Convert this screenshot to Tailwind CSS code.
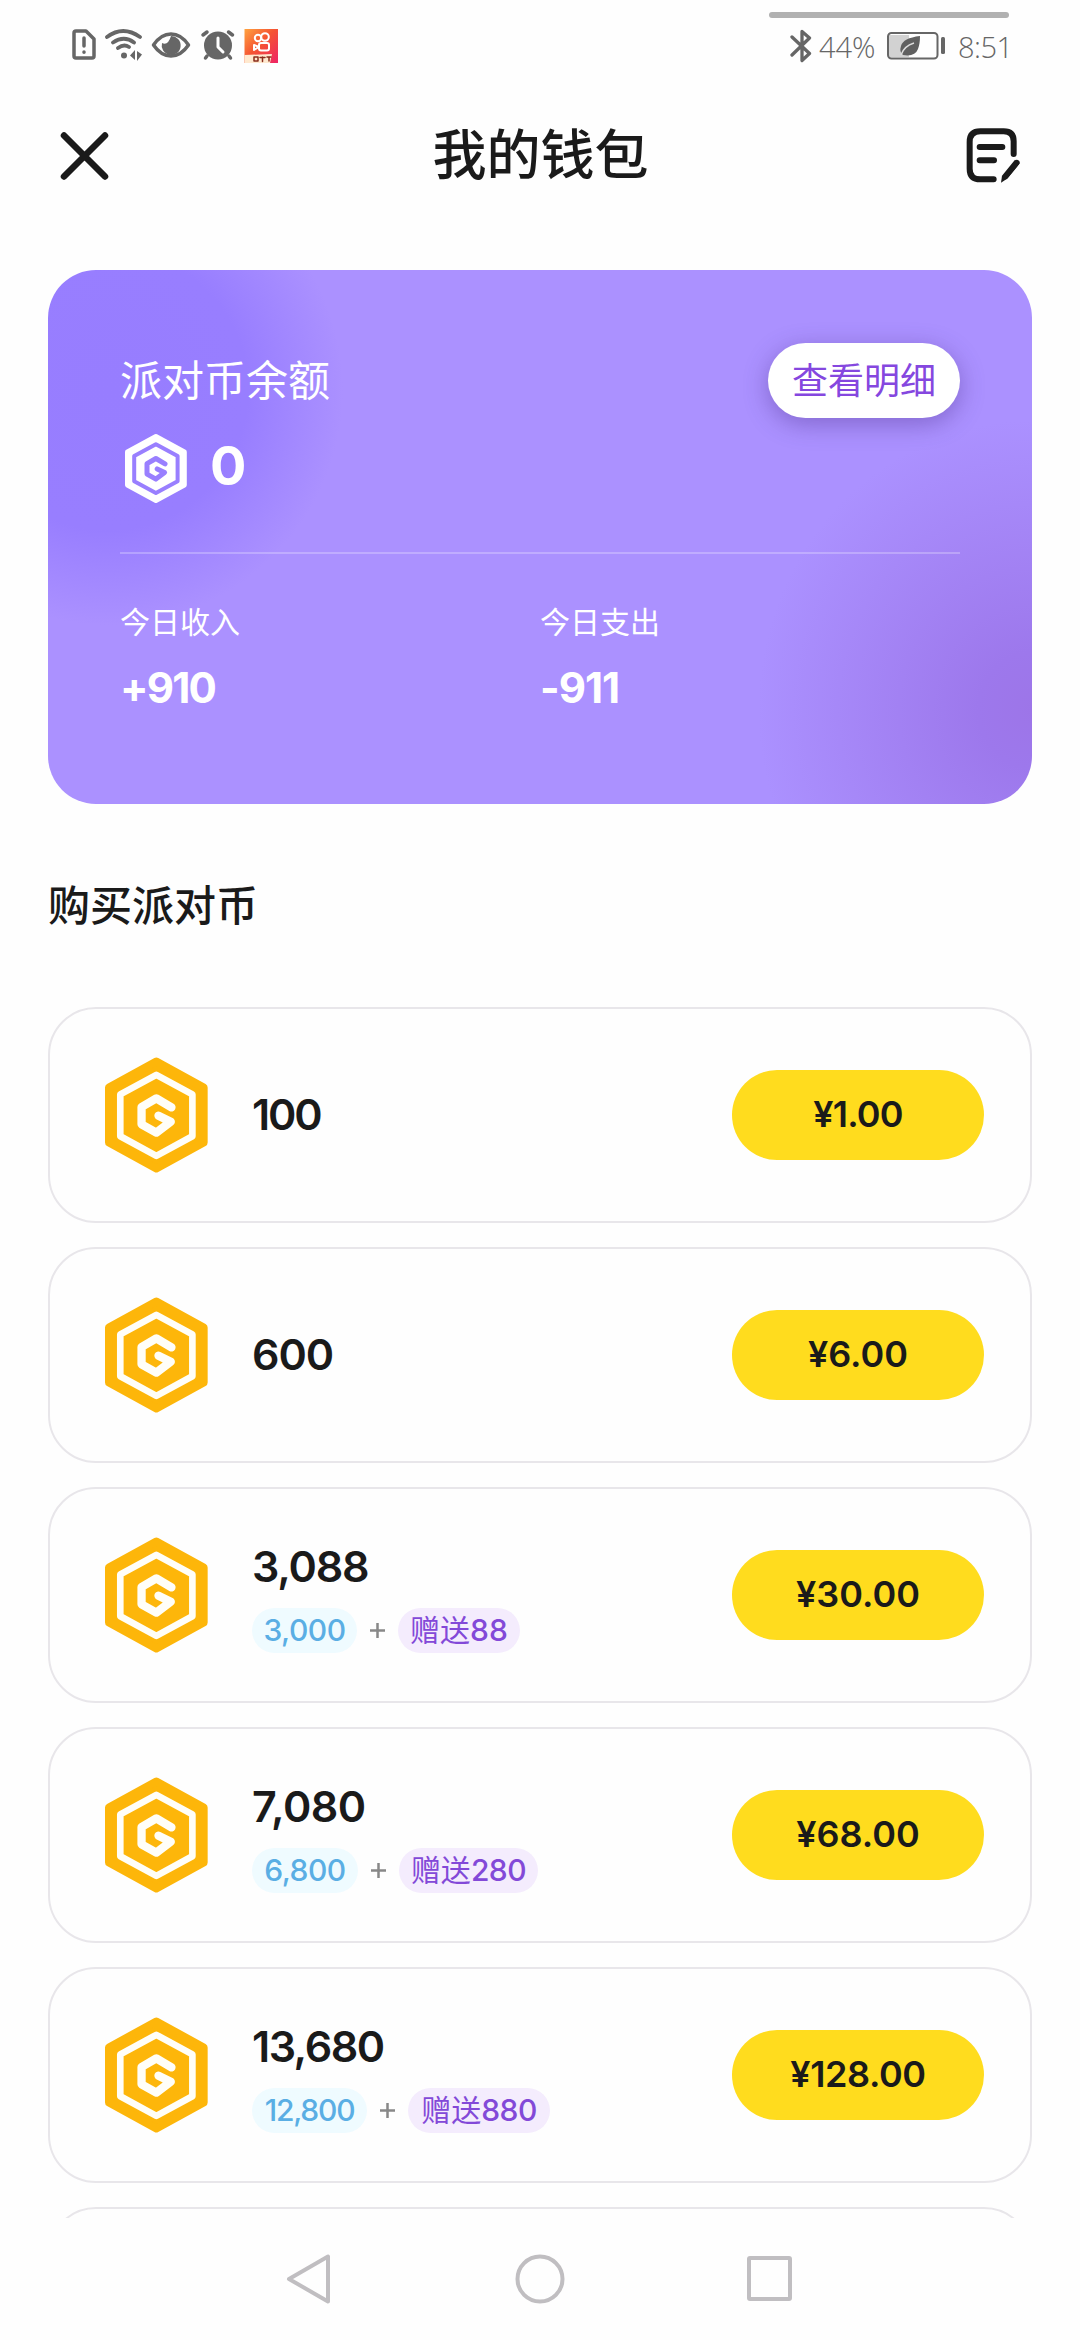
<!DOCTYPE html>
<html lang="zh-CN">
<head>
<meta charset="utf-8">
<title>我的钱包</title>
<script src="https://cdn.jsdelivr.net/npm/@tailwindcss/browser@4"></script>
</head>
<body class="bg-[#fefefe]">
<svg class="hidden">
  <symbol id="coin" viewBox="75 78 310 354">
    <path d="M229.500 94L372 172V338L229.500 416L87 338V172Z" fill="currentColor" stroke="currentColor" stroke-width="24" stroke-linejoin="round"/>
    <path d="M229.500 134L338 193V319L229.500 378L121 319V193Z" fill="none" stroke-width="20" stroke-linejoin="round"/>
    <path d="M275 232L229.500 205L185 231V283L229.500 308L273 275L236 257" fill="none" stroke-width="25" stroke-linejoin="round" stroke-linecap="round"/>
  </symbol>
</svg>
<div class="flex h-[2340px] w-[1080px] flex-col overflow-hidden bg-[#fefefe] font-[Inter,'Noto_Sans_CJK_SC',sans-serif] text-[#1a1a1a]">

  <!-- status bar -->
  <div class="relative flex h-[92px] shrink-0 items-center justify-between pr-[71px] pl-[72px] text-[#666]">
    <div class="absolute top-3 right-[71px] h-1.5 w-[240px] rounded-full bg-[#b1b1b1]"></div>
    <svg class="h-[36px] w-[207px]" viewBox="72 28 207 36" fill="none" stroke="#666" stroke-width="3.500" stroke-linecap="round" stroke-linejoin="round">
      <path d="M76 31H86L94 39V56Q94 58 92 58H76Q74 58 74 56V33Q74 31 76 31Z"/>
      <path d="M84 38V46M84 52V52.200"/>
      <path d="M107 37Q123 25 140 37M113 42.500Q124 35 134 42.500M118 48Q124 43.500 129 47" stroke-width="3.800"/>
      <circle cx="124" cy="55.500" r="3" fill="#666" stroke="none"/>
      <path d="M130 55.500L135 50V60ZM137 51V61L142 54.500Z" fill="#666" stroke="none"/>
      <path d="M153.500 45Q161 34 171 34T188.500 45Q181 56 171 56T153.500 45Z"/>
      <path d="M171 36A9.500 9.500 0 1 1 162 43Q168 46 171 36Z" fill="#666" stroke="none"/>
      <circle cx="218" cy="45.500" r="14" fill="#666" stroke="none"/>
      <path d="M203 35L207 32M232.500 35L228.500 32M207 56L205.500 58M229 56L230.500 58"/>
      <path d="M218 38V47L223 52" stroke="#fff" stroke-width="3"/>
      <defs><linearGradient id="app" x1="0" y1="0" x2="1" y2="1"><stop offset="0" stop-color="#ffa340"/><stop offset=".45" stop-color="#f55532"/><stop offset="1" stop-color="#ee2466"/></linearGradient></defs>
      <path d="M244.500 29H278V63H244.500Z" fill="url(#app)" stroke="none"/>
      <path d="M244.500 55L272 54L270 63H244.500Z" fill="#ffe9cf" stroke="none"/>
      <g stroke="#fff" stroke-width="2"><circle cx="258" cy="38" r="3.200"/><circle cx="265" cy="37" r="3.800"/><rect x="259" y="43" width="10" height="7.500" rx="2"/><path d="M254 45L259 47L254 50Z"/></g>
      <path d="M254 57H258V61H254ZM260 57.500H265M262.500 57V61.500M267 57H271M269 57V61" stroke="#8a2c1c" stroke-width="1.500"/>
    </svg>
    <div class="flex items-center font-['Open_Sans',sans-serif] text-[29px] leading-none font-light">
      <svg class="h-[34px] w-[22px]" viewBox="790 28 22 34" fill="none" stroke="#666" stroke-width="3.300" stroke-linejoin="round" stroke-linecap="round"><path d="M792 36L809.500 52.500L802 59.500V30.500L809.500 37L792 54"/></svg>
      <span class="ml-[7px] w-[55px] whitespace-nowrap">44%</span>
      <svg class="ml-[12px] h-[30px] w-[60px]" viewBox="886 31 60 30" fill="none">
        <path d="M889 35H909V57H889Z" fill="#d2d2d2"/>
        <rect x="888" y="33" width="49.500" height="25.500" rx="3.500" stroke="#666" stroke-width="2"/>
        <path d="M920 36Q903 38 901 46Q899 52 903 55Q915 57 918 49Q920 44 920 36Z" fill="#606060"/>
        <path d="M901 55Q904 46 914 43" stroke="#ddd" stroke-width="1.500"/>
        <rect x="941" y="37" width="4" height="17" rx="1.500" fill="#666"/>
      </svg>
      <span class="ml-[12px] w-[51px] tracking-[-0.500px] whitespace-nowrap">8:51</span>
    </div>
  </div>

  <!-- header -->
  <header class="flex h-[127px] shrink-0 items-center justify-between pr-[58px] pl-[60px]">
    <svg class="size-[49px]" viewBox="0 0 49 49" fill="none" stroke="#1a1a1a" stroke-width="6.500" stroke-linecap="round"><path d="M4 4.500L45 45.500M45 4.500L4 45.500"/></svg>
    <h1 class="pl-1.5 text-[54px] leading-none font-medium">我的钱包</h1>
    <svg class="h-[56px] w-[56px]" viewBox="73 84 168 168" fill="none" stroke="#1a1a1a" stroke-width="18" stroke-linecap="round" stroke-linejoin="round"><path d="M216 162V124Q216 94 186 94H116Q84 94 84 126V206Q84 238 116 238H156M114 141H182M114 181H157"/><path d="M220 179L234 190L196 236L178 248L181 227Z" fill="#1a1a1a" stroke="none"/><path d="M226 188L192 230" stroke-width="16"/></svg>
  </header>

  <!-- balance card -->
  <section class="mx-12 mt-[51px] h-[534px] shrink-0 rounded-[48px] bg-[#ab91ff] bg-[radial-gradient(circle_at_60px_120px,#977dff_0px,#987eff_140px,#977dff00_235px),radial-gradient(ellipse_275px_290px_at_985px_440px,#9d75e8_0%,#9d78ec_20%,#9d78ec00_100%)] px-[72px] pt-[73px] text-white">
    <div class="flex h-[75px] items-center justify-between">
      <span class="text-[42px] leading-none">派对币余额</span>
      <button class="h-[75px] w-[192px] rounded-full bg-white text-[36px] leading-none text-[#8547df] shadow-[0_6px_24px_rgba(70,40,130,0.400)]">查看明细</button>
    </div>
    <div class="mt-[15px] flex h-[71px] items-center">
      <svg class="ml-[5px] h-[71px] w-[62px] stroke-[#997fff] text-white"><use href="#coin"/></svg>
      <span class="ml-[23px] pb-1.5 text-[54px] leading-none font-bold">0</span>
    </div>
    <div class="mt-[48px] h-0.5 bg-white/25"></div>
    <div class="mt-[48px] grid grid-cols-2 gap-y-[22px]">
      <span class="text-[30px] leading-[40px]">今日收入</span>
      <span class="text-[30px] leading-[40px]">今日支出</span>
      <span class="text-[42px] leading-[48px] font-bold tracking-[-1.800px]">+910</span>
      <span class="text-[42px] leading-[48px] font-bold tracking-[-1px]">-911</span>
    </div>
  </section>

  <h2 class="mt-[72px] ml-12 shrink-0 text-[42px] leading-[60px] font-medium">购买派对币</h2>

  <!-- packages -->
  <main class="mx-12 mt-[71px] flex h-[1211px] shrink-0 flex-col gap-6 overflow-hidden">
    <div class="flex h-[216px] shrink-0 items-center rounded-[48px] border-2 border-[#e8e6ea] pr-[46px] pl-[55px]">
      <svg class="h-[118px] w-[103px] stroke-[#fffef8] text-[#fdb60a]"><use href="#coin"/></svg>
      <span class="ml-[44px] pb-0.5 text-[43px] leading-none font-semibold tracking-[-2.200px]">100</span>
      <button class="ml-auto h-[90px] w-[252px] rounded-full bg-[#ffdc1e] pb-0.5 text-[36px] leading-none font-semibold tracking-[-0.800px]">¥1.00</button>
    </div>
    <div class="flex h-[216px] shrink-0 items-center rounded-[48px] border-2 border-[#e8e6ea] pr-[46px] pl-[55px]">
      <svg class="h-[118px] w-[103px] stroke-[#fffef8] text-[#fdb60a]"><use href="#coin"/></svg>
      <span class="ml-[44px] pb-0.5 text-[43px] leading-none font-semibold tracking-[-1px]">600</span>
      <button class="ml-auto h-[90px] w-[252px] rounded-full bg-[#ffdc1e] pb-0.5 text-[36px] leading-none font-semibold">¥6.00</button>
    </div>
    <div class="flex h-[216px] shrink-0 items-center rounded-[48px] border-2 border-[#e8e6ea] pr-[46px] pl-[55px]">
      <svg class="h-[118px] w-[103px] stroke-[#fffef8] text-[#fdb60a]"><use href="#coin"/></svg>
      <div class="ml-[44px]">
        <div class="pt-0.5 text-[43px] leading-[54px] font-semibold tracking-[-1.200px]">3,088</div>
        <div class="mt-[15px] flex h-[45px] items-center text-[30px] leading-none">
          <span class="flex h-[45px] w-[105px] items-center justify-center rounded-full bg-[#effbff] pb-0.5 font-medium tracking-[-0.500px] text-[#5aaee4]">3,000</span>
          <svg class="mx-[13px] size-[15px]" viewBox="0 0 15 15" stroke="#888" stroke-width="2.500"><path d="M0 7.500H15M7.500 0V15"/></svg>
          <span class="flex h-[45px] w-[122px] items-center justify-center rounded-full bg-[#f4ecfd] pb-0.5 text-[#8349d8]">赠送<span class="font-medium">88</span></span>
        </div>
      </div>
      <button class="ml-auto h-[90px] w-[252px] rounded-full bg-[#ffdc1e] pb-0.5 text-[36px] leading-none font-semibold">¥30.00</button>
    </div>
    <div class="flex h-[216px] shrink-0 items-center rounded-[48px] border-2 border-[#e8e6ea] pr-[46px] pl-[55px]">
      <svg class="h-[118px] w-[103px] stroke-[#fffef8] text-[#fdb60a]"><use href="#coin"/></svg>
      <div class="ml-[44px]">
        <div class="pt-0.5 text-[43px] leading-[54px] font-semibold tracking-[-0.500px]">7,080</div>
        <div class="mt-[15px] flex h-[45px] items-center text-[30px] leading-none">
          <span class="flex h-[45px] w-[106px] items-center justify-center rounded-full bg-[#effbff] pb-0.5 font-medium tracking-[-0.500px] text-[#5aaee4]">6,800</span>
          <svg class="mx-[13px] size-[15px]" viewBox="0 0 15 15" stroke="#888" stroke-width="2.500"><path d="M0 7.500H15M7.500 0V15"/></svg>
          <span class="flex h-[45px] w-[139px] items-center justify-center rounded-full bg-[#f4ecfd] pb-0.5 text-[#8349d8]">赠送<span class="font-medium tracking-[-0.500px]">280</span></span>
        </div>
      </div>
      <button class="ml-auto h-[90px] w-[252px] rounded-full bg-[#ffdc1e] pb-0.5 text-[36px] leading-none font-semibold">¥68.00</button>
    </div>
    <div class="flex h-[216px] shrink-0 items-center rounded-[48px] border-2 border-[#e8e6ea] pr-[46px] pl-[55px]">
      <svg class="h-[118px] w-[103px] stroke-[#fffef8] text-[#fdb60a]"><use href="#coin"/></svg>
      <div class="ml-[44px]">
        <div class="pt-0.5 text-[43px] leading-[54px] font-semibold tracking-[-1.500px]">13,680</div>
        <div class="mt-[15px] flex h-[45px] items-center text-[30px] leading-none">
          <span class="flex h-[45px] w-[115px] items-center justify-center rounded-full bg-[#effbff] pb-0.5 font-medium tracking-[-1.200px] text-[#5aaee4]">12,800</span>
          <svg class="mx-[13px] size-[15px]" viewBox="0 0 15 15" stroke="#888" stroke-width="2.500"><path d="M0 7.500H15M7.500 0V15"/></svg>
          <span class="flex h-[45px] w-[142px] items-center justify-center rounded-full bg-[#f4ecfd] pb-0.5 text-[#8349d8]">赠送<span class="font-medium tracking-[-0.500px]">880</span></span>
        </div>
      </div>
      <button class="ml-auto h-[90px] w-[252px] rounded-full bg-[#ffdc1e] pb-0.5 text-[36px] leading-none font-semibold tracking-[-0.400px]">¥128.00</button>
    </div>
    <div class="h-[216px] shrink-0 rounded-[48px] border-2 border-[#e8e6ea]"></div>
  </main>

  <!-- system navigation -->
  <nav class="flex flex-1 items-center justify-center gap-[180px]">
    <svg class="size-[50px]" viewBox="0 0 50 50" fill="none" stroke="#c0bec1" stroke-width="4" stroke-linejoin="round"><path d="M43 2.500V47.500L4 25Z"/></svg>
    <svg class="size-[50px]" viewBox="0 0 50 50" fill="none" stroke="#c0bec1" stroke-width="4"><circle cx="25" cy="25" r="22.500"/></svg>
    <svg class="size-[50px]" viewBox="0 0 50 50" fill="none" stroke="#c0bec1" stroke-width="4"><rect x="4" y="4" width="41" height="41" rx="1"/></svg>
  </nav>
</div>
</body>
</html>
